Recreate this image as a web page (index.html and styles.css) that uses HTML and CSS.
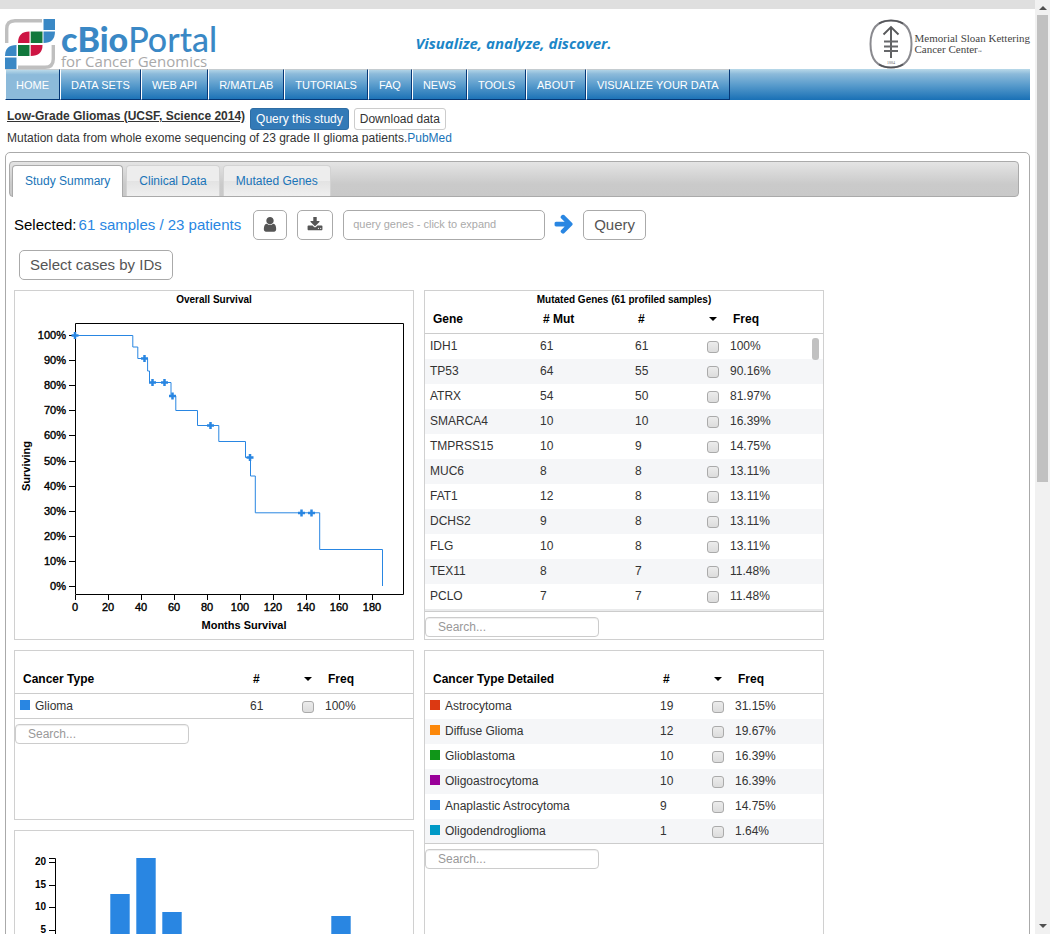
FILE: index.html
```html
<!DOCTYPE html>
<html lang="en">
<head>
<meta charset="utf-8">
<title>cBioPortal - Low-Grade Gliomas (UCSF, Science 2014)</title>
<link rel="stylesheet" href="styles.css">
</head>
<body>
<div class="shell">
<div class="page">
  <header class="masthead">
    <a class="brand" href="#">
      <svg class="brand-mark" viewBox="0 0 50 50" aria-hidden="true">
        <g fill="none" stroke="#bfbfbf" stroke-width="3.4"><path d="M1.7 24V10Q1.7 1.7 10 1.7H37"/><path d="M48.3 26V40Q48.3 48.3 40 48.3H13"/></g>
        <g fill="#3a88c5"><path d="M38.5 0H50V11H38.5Z"/><path d="M38.5 12.5H50Q50 24 38.5 24Z"/><path d="M11.5 26V37H0Q0 26 11.5 26Z"/><path d="M0 38.5H11.5V50H0Z"/></g>
        <g fill="#cd1543"><path d="M24.5 12.5V24H13Q13 12.5 24.5 12.5Z"/><path d="M25.700 26H37.500Q37.500 37 25.700 37Z"/></g>
        <g fill="#11783c"><path d="M25.700 12.500H37.500V24H25.700Z"/><path d="M13 26H24.500V37H13Z"/></g>
      </svg>
      <span class="brand-text"><span class="brand-name"><b>cBio</b>Portal</span><span class="brand-sub">for Cancer Genomics</span></span>
    </a>
    <p class="tagline">Visualize, analyze, discover.</p>
    <a class="msk" href="#">
      <svg class="msk-mark" viewBox="0 0 44 50" aria-hidden="true">
        <path d="M22 1.500C36 1.500 42.500 9 42.500 25S36 48.500 22 48.500 1.500 41 1.500 25 8 1.500 22 1.500Z" fill="#fff" stroke="#8a8a8f" stroke-width="2"/>
        <path d="M10 4.500Q15 1.500 22 1.500T34 4.500M10 45.500Q15 48.500 22 48.500T34 45.500" fill="none" stroke="#55565a" stroke-width="1.500"/>
        <path d="M22 8V39M14.500 15.500L22 8l7.500 7.500" fill="none" stroke="#58595b" stroke-width="1.900"/>
        <path d="M15 22.500H29M15 27.500H29M15 32H29" stroke="#66676a" stroke-width="2"/>
        <text x="22" y="45" text-anchor="middle" class="msk-year">1884</text>
      </svg>
      <span class="msk-text">Memorial Sloan Kettering<br>Cancer Center<span class="tm">™</span></span>
    </a>
  </header>

  <nav class="nav">
    <a class="current" href="#">Home</a><a href="#">Data Sets</a><a href="#">Web API</a><a href="#">R/MATLAB</a><a href="#">Tutorials</a><a href="#">FAQ</a><a href="#">News</a><a href="#">Tools</a><a href="#">About</a><a href="#">Visualize Your Data</a>
  </nav>

  <section class="study">
    <div class="study-head">
      <h1>Low-Grade Gliomas (UCSF, Science 2014)</h1>
      <button class="btn btn-primary" type="button">Query this study</button>
      <button class="btn" type="button">Download data</button>
    </div>
    <p>Mutation data from whole exome sequencing of 23 grade II glioma patients.<a href="#">PubMed</a></p>
  </section>

  <main class="panel">
    <div class="tabs">
      <a class="tab active" href="#">Study Summary</a>
      <a class="tab" href="#">Clinical Data</a>
      <a class="tab" href="#">Mutated Genes</a>
    </div>

    <div class="toolbar">
      <p class="selected"><span>Selected:</span><span class="count">61 samples / 23 patients</span></p>
      <button class="tool" type="button" aria-label="View patients"><svg class="icon" viewBox="64 128 1664 1664"><path d="M1536 1399q0 109-62.500 187t-150.500 78h-854q-88 0-150.500-78t-62.500-187q0-85 8.500-160.500t31.500-152 58.500-131 94-89 134.500-34.500q131 128 313 128t313-128q76 0 134.500 34.500t94 89 58.500 131 31.500 152 8.500 160.500zm-256-887q0 159-112.500 271.500t-271.500 112.500-271.500-112.500-112.500-271.500 112.500-271.500 271.500-112.500 271.500 112.500 112.500 271.500z"/></svg></button>
      <button class="tool wide" type="button" aria-label="Download"><svg class="icon" viewBox="0 64 1792 1792"><path d="M1344 1344q0-26-19-45t-45-19-45 19-19 45 19 45 45 19 45-19 19-45zm256 0q0-26-19-45t-45-19-45 19-19 45 19 45 45 19 45-19 19-45zm128-224v320q0 40-28 68t-68 28h-1472q-40 0-68-28t-28-68v-320q0-40 28-68t68-28h465l135 136q58 56 136 56t136-56l136-136h464q40 0 68 28t28 68zm-325-569q17 41-14 70l-448 448q-18 19-45 19t-45-19l-448-448q-31-29-14-70 17-39 59-39h256v-448q0-26 19-45t45-19h256q26 0 45 19t19 45v448h256q42 0 59 39z"/></svg></button>
      <input class="genes" type="text" placeholder="query genes - click to expand" aria-label="Query genes">
      <svg class="arrow" viewBox="0 128 1792 1792" aria-hidden="true"><path d="M1600 960q0 54-37 91l-651 651q-39 37-91 37-51 0-90-37l-75-75q-38-38-38-91t38-91l293-293h-704q-52 0-84.500-37.500t-32.500-90.500v-128q0-53 32.500-90.500t84.500-37.500h704l-293-294q-38-36-38-90t38-90l75-75q38-38 90-38 53 0 91 38l651 651q37 35 37 90z"/></svg>
      <button class="tool text" type="button">Query</button>
    </div>
    <div class="toolbar second"><button class="tool text" type="button">Select cases by IDs</button></div>

    <div class="board">
      <div class="column">
        <section class="card tall">
          <svg class="chart" viewBox="0 0 398 348" role="img" aria-label="Overall survival curve">
            <text class="chart-title" x="199" y="12">Overall Survival</text>
            <path class="axis" d="M60.500 32.500H388.500V303.500H60.500Z"/>
            <path class="axis" d="M54 44.500h6M54 69.500h6M54 94.500h6M54 119.500h6M54 144.500h6M54 170.500h6M54 195.500h6M54 220.500h6M54 245.500h6M54 270.500h6M54 295.500h6M60.500 304v5M93.500 304v5M126.500 304v5M159.500 304v5M192.500 304v5M225.500 304v5M258.500 304v5M291.500 304v5M324.500 304v5M357.500 304v5"/>
            <g class="tick y">
              <text x="51" y="48">100%</text><text x="51" y="73">90%</text><text x="51" y="98">80%</text><text x="51" y="123">70%</text><text x="51" y="148">60%</text><text x="51" y="174">50%</text><text x="51" y="199">40%</text><text x="51" y="224">30%</text><text x="51" y="249">20%</text><text x="51" y="274">10%</text><text x="51" y="299">0%</text>
            </g>
            <g class="tick x">
              <text x="60" y="320">0</text><text x="93" y="320">20</text><text x="126" y="320">40</text><text x="159" y="320">60</text><text x="192" y="320">80</text><text x="225" y="320">100</text><text x="258" y="320">120</text><text x="291" y="320">140</text><text x="324" y="320">160</text><text x="357" y="320">180</text>
            </g>
            <text class="axis-title" x="229" y="338">Months Survival</text>
            <text class="axis-title" transform="translate(15 175) rotate(-90)">Surviving</text>
            <path class="curve" d="M60 44.500H117.800V56H122.800V67.500H132.600V80H134.500V91.500H156V105H160.800V119.500H182.500V134.500H203.800V150.500H230.500V166.500H235.500V185H240.300V221.800H304.700V258.500H367.500V295"/>
            <path class="censor" d="M56.500 44.500h7m-3.500-3.500v7M126 67.500h7m-3.500-3.500v7M134 91.500h7m-3.500-3.500v7M146 91.500h7m-3.500-3.500v7M154 105h7m-3.500-3.500v7M192 134.500h7m-3.500-3.500v7M231.500 166.500h7m-3.500-3.500v7M283 222h7m-3.500-3.500v7M293 222h7m-3.500-3.500v7"/>
          </svg>
        </section>

        <section class="card short">
          <h2 class="card-title"></h2>
          <div class="table-box">
            <table class="cases">
              <colgroup><col class="c-type"><col class="c-count"><col></colgroup>
              <thead><tr><th>Cancer Type</th><th><div class="pair">#<i class="sort"></i></div></th><th>Freq</th></tr></thead>
              <tbody><tr><td><span class="swatch blue"></span>Glioma</td><td><div class="pair">61<input type="checkbox" aria-label="Glioma"></div></td><td>100%</td></tr></tbody>
            </table>
          </div>
          <input class="search" type="text" placeholder="Search..." aria-label="Search cancer type">
        </section>

        <section class="card tall">
          <svg class="chart" viewBox="0 0 398 348" role="img" aria-label="Histogram">
            <path class="axis" d="M34 27.500H40.500V300M34 31.500h6M34 54.500h6M34 76.500h6M34 99.500h6M34 122.500h6"/>
            <g class="bin"><text x="31" y="34">20</text><text x="31" y="57">15</text><text x="31" y="79">10</text><text x="31" y="102">5</text></g>
            <g class="bars"><path d="M95.300 63h19.400v60H95.300ZM121.300 27h19.400v96h-19.400ZM147.300 81h19.400v42h-19.400ZM316.300 85h19.400v38h-19.400Z"/></g>
          </svg>
        </section>
      </div>

      <div class="column">
        <section class="card tall">
          <h2 class="card-title">Mutated Genes (61 profiled samples)</h2>
          <div class="table-box scrolling">
            <table class="genes-table">
              <colgroup><col class="c-gene"><col class="c-mut"><col class="c-mut"><col></colgroup>
              <thead><tr><th>Gene</th><th># Mut</th><th><div class="pair">#<i class="sort"></i></div></th><th>Freq</th></tr></thead>
              <tbody>
                <tr><td>IDH1</td><td>61</td><td><div class="pair">61<input type="checkbox" aria-label="IDH1"></div></td><td>100%</td></tr>
                <tr><td>TP53</td><td>64</td><td><div class="pair">55<input type="checkbox" aria-label="TP53"></div></td><td>90.16%</td></tr>
                <tr><td>ATRX</td><td>54</td><td><div class="pair">50<input type="checkbox" aria-label="ATRX"></div></td><td>81.97%</td></tr>
                <tr><td>SMARCA4</td><td>10</td><td><div class="pair">10<input type="checkbox" aria-label="SMARCA4"></div></td><td>16.39%</td></tr>
                <tr><td>TMPRSS15</td><td>10</td><td><div class="pair">9<input type="checkbox" aria-label="TMPRSS15"></div></td><td>14.75%</td></tr>
                <tr><td>MUC6</td><td>8</td><td><div class="pair">8<input type="checkbox" aria-label="MUC6"></div></td><td>13.11%</td></tr>
                <tr><td>FAT1</td><td>12</td><td><div class="pair">8<input type="checkbox" aria-label="FAT1"></div></td><td>13.11%</td></tr>
                <tr><td>DCHS2</td><td>9</td><td><div class="pair">8<input type="checkbox" aria-label="DCHS2"></div></td><td>13.11%</td></tr>
                <tr><td>FLG</td><td>10</td><td><div class="pair">8<input type="checkbox" aria-label="FLG"></div></td><td>13.11%</td></tr>
                <tr><td>TEX11</td><td>8</td><td><div class="pair">7<input type="checkbox" aria-label="TEX11"></div></td><td>11.48%</td></tr>
                <tr><td>PCLO</td><td>7</td><td><div class="pair">7<input type="checkbox" aria-label="PCLO"></div></td><td>11.48%</td></tr>
              </tbody>
            </table>
            <span class="thumb"></span>
          </div>
          <input class="search" type="text" placeholder="Search..." aria-label="Search genes">
        </section>

        <section class="card tall">
          <h2 class="card-title"></h2>
          <div class="table-box">
            <table class="cases">
              <colgroup><col class="c-type"><col class="c-count"><col></colgroup>
              <thead><tr><th>Cancer Type Detailed</th><th><div class="pair">#<i class="sort"></i></div></th><th>Freq</th></tr></thead>
              <tbody>
                <tr><td><span class="swatch red"></span>Astrocytoma</td><td><div class="pair">19<input type="checkbox" aria-label="Astrocytoma"></div></td><td>31.15%</td></tr>
                <tr><td><span class="swatch orange"></span>Diffuse Glioma</td><td><div class="pair">12<input type="checkbox" aria-label="Diffuse Glioma"></div></td><td>19.67%</td></tr>
                <tr><td><span class="swatch green"></span>Glioblastoma</td><td><div class="pair">10<input type="checkbox" aria-label="Glioblastoma"></div></td><td>16.39%</td></tr>
                <tr><td><span class="swatch purple"></span>Oligoastrocytoma</td><td><div class="pair">10<input type="checkbox" aria-label="Oligoastrocytoma"></div></td><td>16.39%</td></tr>
                <tr><td><span class="swatch blue"></span>Anaplastic Astrocytoma</td><td><div class="pair">9<input type="checkbox" aria-label="Anaplastic Astrocytoma"></div></td><td>14.75%</td></tr>
                <tr><td><span class="swatch teal"></span>Oligodendroglioma</td><td><div class="pair">1<input type="checkbox" aria-label="Oligodendroglioma"></div></td><td>1.64%</td></tr>
              </tbody>
            </table>
          </div>
          <input class="search" type="text" placeholder="Search..." aria-label="Search cancer type detailed">
        </section>
      </div>
    </div>
  </main>
</div>
<div class="scrollbar" aria-hidden="true"><i class="up"></i><span></span><i class="down"></i></div>
</div>
</body>
</html>
```
FILE: styles.css
```css
* { box-sizing: border-box; }
body { margin: 0; background: #fff; color: #333; font: 12px/16px "Liberation Sans", Arial, sans-serif; }
h1, h2, p { margin: 0; }
a { color: #1974b8; text-decoration: none; }
button, input { font-family: inherit; }

.shell { display: flex; height: 100vh; overflow: hidden; }
.page { flex: 1; min-width: 0; overflow: hidden; border-top: 9px solid #dfdfdf; padding: 0 5px; }

.scrollbar { display: flex; flex-direction: column; align-items: center; width: 15px; background: #f1f1f1; }
.scrollbar span { width: 11px; height: 50%; background: #c1c1c1; }
.scrollbar i { border: 0 solid transparent; border-width: 6px 4px; }
.scrollbar .up { border-bottom: 4px solid #505050; height: 10px; margin-bottom: 5px; }
.scrollbar .down { height: 10px; border-top: 4px solid #505050; margin-top: auto; }

.masthead { display: grid; grid-template-columns: 1fr auto 1fr; height: 60px; }
.brand { display: flex; padding-top: 10px; gap: 6px; }
.brand-mark { width: 50px; height: 50px; flex: none; }
.brand-text { display: flex; flex-direction: column; white-space: nowrap; }
.brand-name { font: 500 34px/40px Lato, sans-serif; color: #3a88c5; }
.brand-name b { font-weight: 900; }
.brand-sub { margin-top: -6px; font: 400 15px/16px "Open Sans", sans-serif; color: #a9a9a9; }
.tagline { padding: 22px 8px 0 0; font: italic 700 15px/24px "Open Sans", sans-serif; color: #1c86c7; }
.msk { display: flex; justify-content: flex-end; gap: 2px; padding-top: 10px; }
.msk-mark { width: 44px; height: 50px; }
.msk-year { font: 4px "Liberation Serif", serif; fill: #666; }
.msk-text { padding-top: 14px; font: 11px/11px "Liberation Serif", serif; color: #444; white-space: nowrap; }
.tm { font-size: 4px; }

.nav { display: flex; height: 31px; background: linear-gradient(#b9d9e9 0, #8cbada 16%, #5b9dcd 50%, #1970b5 100%); }
.nav a { padding: 0 10px; border: 1px solid; border-color: #c5ccd0 #063877 #063877 #fff; color: #fff; font-size: 11px; line-height: 31px; text-transform: uppercase; }
.nav .current { background: linear-gradient(#b9d9e9 0, #8cbada 16%, #8cbada 100%); }

.study { padding: 8px 2px 6px; }
.study-head { display: flex; gap: 5px; }
h1 { font-size: 12px; line-height: 16px; text-decoration: underline; }
.btn { height: 22px; padding: 0 5px; border: 1px solid #ccc; border-radius: 3px; background: #fff; color: #333; font-size: 12px; }
.btn-primary { background: #337ab7; border-color: #2e6da4; color: #fff; }

.panel { border: 1px solid #aaa; border-radius: 5px; padding: 8px 10px 8px 3px; }
.tabs { display: flex; gap: 3px; height: 36px; padding: 3px 2px 0; border: 1px solid #aaa; border-radius: 4px; background: linear-gradient(#e4e4e4, #cacaca 65%, #c9c9c9); }
.tab { padding: 0 12px; border: 1px solid #d3d3d3; border-bottom: 0; border-radius: 4px 4px 0 0; background: linear-gradient(#ededed 50%, #e3e3e3 50%, #efefef); line-height: 31px; }
.tab.active { margin-bottom: -1px; border-color: #aaa; background: #fff; }

.toolbar { display: flex; gap: 10px; height: 30px; margin: 13px 0 0 5px; align-items: center; }
.toolbar.second { margin: 10px 0 0 10px; }
.selected { display: flex; gap: 2px; margin-right: 2px; color: #000; font-size: 15px; }
.selected .count { color: #2986e2; }
.tool { display: flex; align-items: center; height: 30px; padding: 0 8px; border: 1px solid #aaa; border-radius: 5px; background: #fff; color: #555; font-size: 15px; }
.tool.wide { padding: 0 9px; }
.tool.text { padding: 0 10px 2px; }
.icon { width: 16px; height: 16px; fill: #555; }
.genes { width: 202px; height: 30px; padding: 0 9px 2px; border: 1px solid #aaa; border-radius: 5px; font-size: 11px; }
.genes::placeholder { color: #aaa; }
.arrow { width: 22px; height: 22px; margin: 0 -2px; fill: #2986e2; }

.board { display: flex; gap: 10px; margin: 10px 0 0 5px; }
.column { display: flex; flex-direction: column; gap: 10px; width: 400px; }
.card { border: 1px solid #d0d0d0; background: #fff; }
.card.tall { min-height: 350px; }
.card.short { min-height: 170px; }
.card-title { height: 18px; color: #000; font-size: 10px; line-height: 17px; text-align: center; }

.table-box { position: relative; overflow: hidden; border-bottom: 1px solid #ccc; }
.table-box.scrolling { padding-bottom: 2px; background: #e9eaeb; }
table { width: 100%; margin-bottom: -1px; border-collapse: separate; border-spacing: 0; table-layout: fixed; background: #fff; }
.scrolling table { margin-bottom: 0; }
.c-gene { width: 110px; }
.c-mut { width: 95px; }
.c-type { width: 230px; }
.c-count { width: 75px; }
th { height: 25px; padding: 0 8px 4px; border-bottom: 1px solid #ccc; color: #000; text-align: left; line-height: 20px; }
td { height: 25px; padding: 0 5px; line-height: 25px; white-space: nowrap; }
tbody tr:nth-child(even) { background: #f5f6f8; }
.pair { display: flex; justify-content: space-between; align-items: center; }
.sort { border: 4px solid transparent; border-top-color: #000; border-bottom: 0; }
.pair input { appearance: none; width: 12px; height: 12px; margin: 0 1px 0 0; border: 1px solid #aaa; border-radius: 3px; background: linear-gradient(#ececec, #dcdcdc); }
.swatch { display: inline-block; width: 10px; height: 10px; margin-right: 5px; }
.blue { background: #2986e2; }
.red { background: #dc3912; }
.orange { background: #fc880b; }
.green { background: #109618; }
.purple { background: #990099; }
.teal { background: #0099c6; }
.thumb { position: absolute; top: 29px; right: 4px; width: 7px; height: 22px; border-radius: 3px; background: #c1c1c1; }
.search { display: block; width: 174px; height: 20px; margin-top: 5px; padding: 0 12px; border: 1px solid #ccc; border-radius: 4px; font-size: 12px; box-shadow: inset 0 1px 1px #eee; }
.search::placeholder { color: #999; }

.chart { display: block; width: 100%; }
.chart text { font-size: 11px; fill: #000; }
.chart .chart-title { font-size: 10px; font-weight: bold; text-anchor: middle; }
.chart .axis-title { font-weight: bold; text-anchor: middle; }
.tick { stroke: #000; stroke-width: 0.4px; }
.tick.y, .bin { text-anchor: end; }
.tick.x { text-anchor: middle; }
.chart .bin text { font-size: 10px; font-weight: bold; }
.axis { fill: none; stroke: #000; }
.curve { fill: none; stroke: #2986e2; }
.censor { stroke: #2986e2; stroke-width: 2.5px; }
.bars { fill: #2986e2; }
```
